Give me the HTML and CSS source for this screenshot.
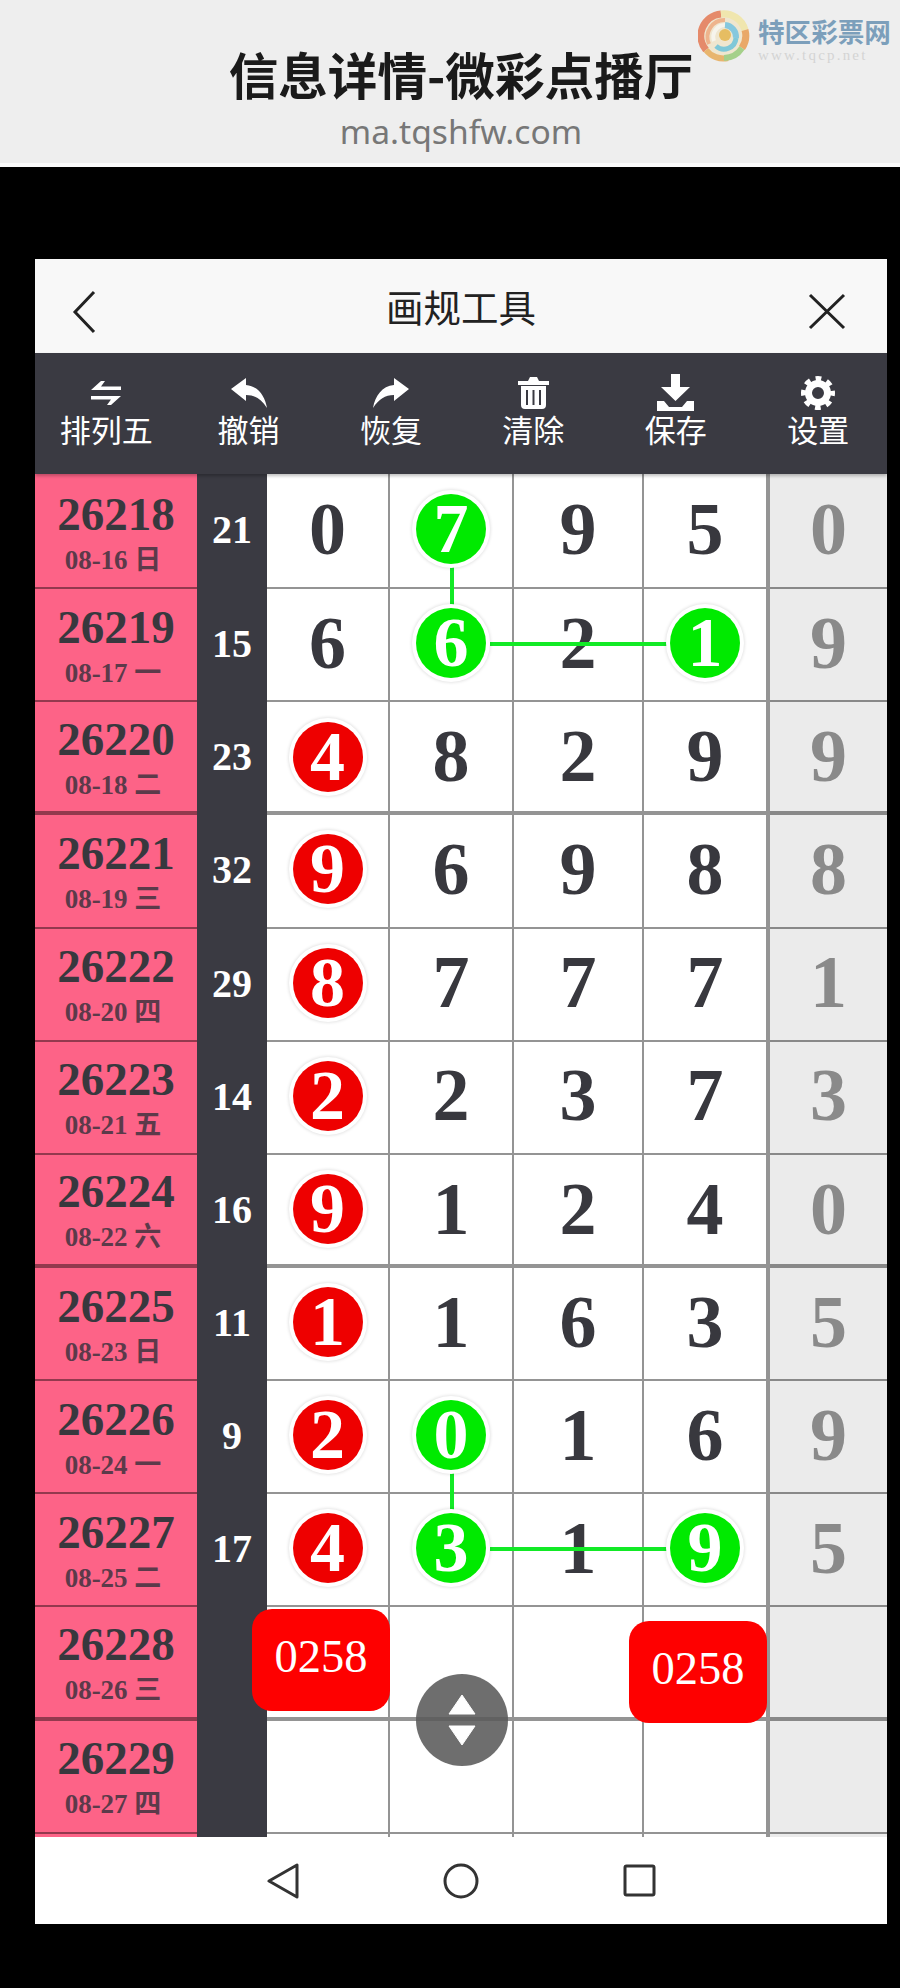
FILE: index.html
```html
<!DOCTYPE html>
<html lang="zh-CN">
<head>
  <meta charset="UTF-8">
  <meta name="viewport" content="width=device-width, initial-scale=1.0">
  <title>信息详情-微彩点播厅</title>
  <link rel="stylesheet" href="styles.css">
</head>
<body>
  <div class="topbar">
    <div class="top-title">信息详情-微彩点播厅</div>
    <div class="top-url">ma.tqshfw.com</div>
    <div class="logo">
      <svg class="logo-mark" viewBox="0 0 52 52" width="52" height="52" fill="none">
        <circle cx="26" cy="26" r="22" fill="#efe6cf"/>
        <path d="M23 4A22 22 0 0 0 8 40" stroke="#e58a6a" stroke-width="7"/>
        <path d="M27 10A17 17 0 0 0 11 34" stroke="#eeb48c" stroke-width="4"/>
        <path d="M8 40A22 22 0 0 0 30 48" stroke="#e8b56e" stroke-width="6"/>
        <path d="M23 4A22 22 0 0 1 47 20" stroke="#f0e6ae" stroke-width="7"/>
        <path d="M47 20A22 22 0 0 1 44 38" stroke="#e9a868" stroke-width="7"/>
        <path d="M44 38A22 22 0 0 1 26 48" stroke="#a5d08a" stroke-width="6"/>
        <path d="M16 31A12 12 0 0 1 27 15" stroke="#f6f4ec" stroke-width="4"/>
        <path d="M27 15A12 12 0 0 1 38 28" stroke="#86c8de" stroke-width="6"/>
        <path d="M38 28A12 12 0 0 1 18 36" stroke="#7fc8d8" stroke-width="5"/>
        <circle cx="27" cy="25" r="6" fill="#e6bd62"/>
      </svg>
      <div class="logo-text">
        <div class="logo-name">特区彩票网</div>
        <div class="logo-url">www.tqcp.net</div>
      </div>
    </div>
  </div>

  <div class="card">
    <div class="head">
      <svg class="head-icon" viewBox="0 0 24 44" width="24" height="44" fill="none">
        <path d="M22 2L3 22L22 42" stroke="#222" stroke-width="3"/>
      </svg>
      <div class="head-title">画规工具</div>
      <svg class="head-icon" viewBox="0 0 38 37" width="38" height="37" fill="none">
        <path d="M2 2L36 35M36 2L2 35" stroke="#222" stroke-width="3"/>
      </svg>
    </div>

    <div class="toolbar">
      <div class="tool">
        <div class="tool-icon">
          <svg viewBox="0 0 30 24" width="30" height="24" fill="#fff"><polygon points="0,9 10,0 14,0 10,5.5 30,5.5 30,9"/><polygon points="30,15 20,24 16,24 20,18.5 0,18.5 0,15"/></svg>
        </div>
        <div class="tool-label">排列五</div>
      </div>
      <div class="tool">
        <div class="tool-icon">
          <svg viewBox="0 0 36 30" width="36" height="30" fill="#fff"><path d="M0 11L15 0V7C27 8 34 18 36 30C30 21 24 17 15 17V23Z"/></svg>
        </div>
        <div class="tool-label">撤销</div>
      </div>
      <div class="tool">
        <div class="tool-icon">
          <svg viewBox="0 0 36 30" width="36" height="30" fill="#fff"><path d="M36 11L21 0V7C9 8 2 18 0 30C6 21 12 17 21 17V23Z"/></svg>
        </div>
        <div class="tool-label">恢复</div>
      </div>
      <div class="tool">
        <div class="tool-icon">
          <svg viewBox="0 0 31 32" width="31" height="32" fill="#fff"><path d="M10 4L12 0H19L21 4H31V8H0V4Z"/><path fill-rule="evenodd" d="M3 9H28V28A4 4 0 0 1 24 32H7A4 4 0 0 1 3 28ZM8 13V28H10V13ZM14.500 13V28H16.500V13ZM21 13V28H23V13Z"/></svg>
        </div>
        <div class="tool-label">清除</div>
      </div>
      <div class="tool">
        <div class="tool-icon">
          <svg viewBox="0 0 37 37" width="37" height="37" fill="#fff"><polygon points="14,0 23,0 23,13 33,13 18.500,27 4,13 14,13"/><polygon points="0,27 7,27 12,33 25,33 30,27 37,27 37,37 0,37"/></svg>
        </div>
        <div class="tool-label">保存</div>
      </div>
      <div class="tool">
        <div class="tool-icon">
          <svg viewBox="0 0 34 34" width="34" height="34" fill="none" stroke="#fff"><circle cx="17" cy="17" r="9.500" stroke-width="7"/><circle cx="17" cy="17" r="14.500" stroke-width="5" stroke-dasharray="5.700 5.690" stroke-dashoffset="2.850"/></svg>
        </div>
        <div class="tool-label">设置</div>
      </div>
    </div>

    <div class="board">
      <div class="row">
        <div class="cell issue"><div class="issue-no">26218</div><div class="issue-date">08-16 日</div></div>
        <div class="sum">21</div>
        <div class="cell">0</div>
        <div class="cell"><span class="ball green">7</span></div>
        <div class="cell">9</div>
        <div class="cell last">5</div>
        <div class="cell extra">0</div>
      </div>
      <div class="row">
        <div class="cell issue"><div class="issue-no">26219</div><div class="issue-date">08-17 一</div></div>
        <div class="sum">15</div>
        <div class="cell">6</div>
        <div class="cell"><span class="ball green">6</span></div>
        <div class="cell">2</div>
        <div class="cell last"><span class="ball green">1</span></div>
        <div class="cell extra">9</div>
      </div>
      <div class="row week-end">
        <div class="cell issue"><div class="issue-no">26220</div><div class="issue-date">08-18 二</div></div>
        <div class="sum">23</div>
        <div class="cell"><span class="ball red">4</span></div>
        <div class="cell">8</div>
        <div class="cell">2</div>
        <div class="cell last">9</div>
        <div class="cell extra">9</div>
      </div>
      <div class="row">
        <div class="cell issue"><div class="issue-no">26221</div><div class="issue-date">08-19 三</div></div>
        <div class="sum">32</div>
        <div class="cell"><span class="ball red">9</span></div>
        <div class="cell">6</div>
        <div class="cell">9</div>
        <div class="cell last">8</div>
        <div class="cell extra">8</div>
      </div>
      <div class="row">
        <div class="cell issue"><div class="issue-no">26222</div><div class="issue-date">08-20 四</div></div>
        <div class="sum">29</div>
        <div class="cell"><span class="ball red">8</span></div>
        <div class="cell">7</div>
        <div class="cell">7</div>
        <div class="cell last">7</div>
        <div class="cell extra">1</div>
      </div>
      <div class="row">
        <div class="cell issue"><div class="issue-no">26223</div><div class="issue-date">08-21 五</div></div>
        <div class="sum">14</div>
        <div class="cell"><span class="ball red">2</span></div>
        <div class="cell">2</div>
        <div class="cell">3</div>
        <div class="cell last">7</div>
        <div class="cell extra">3</div>
      </div>
      <div class="row week-end">
        <div class="cell issue"><div class="issue-no">26224</div><div class="issue-date">08-22 六</div></div>
        <div class="sum">16</div>
        <div class="cell"><span class="ball red">9</span></div>
        <div class="cell">1</div>
        <div class="cell">2</div>
        <div class="cell last">4</div>
        <div class="cell extra">0</div>
      </div>
      <div class="row">
        <div class="cell issue"><div class="issue-no">26225</div><div class="issue-date">08-23 日</div></div>
        <div class="sum">11</div>
        <div class="cell"><span class="ball red">1</span></div>
        <div class="cell">1</div>
        <div class="cell">6</div>
        <div class="cell last">3</div>
        <div class="cell extra">5</div>
      </div>
      <div class="row">
        <div class="cell issue"><div class="issue-no">26226</div><div class="issue-date">08-24 一</div></div>
        <div class="sum">9</div>
        <div class="cell"><span class="ball red">2</span></div>
        <div class="cell"><span class="ball green">0</span></div>
        <div class="cell">1</div>
        <div class="cell last">6</div>
        <div class="cell extra">9</div>
      </div>
      <div class="row">
        <div class="cell issue"><div class="issue-no">26227</div><div class="issue-date">08-25 二</div></div>
        <div class="sum">17</div>
        <div class="cell"><span class="ball red">4</span></div>
        <div class="cell"><span class="ball green">3</span></div>
        <div class="cell">1</div>
        <div class="cell last"><span class="ball green">9</span></div>
        <div class="cell extra">5</div>
      </div>
      <div class="row week-end">
        <div class="cell issue"><div class="issue-no">26228</div><div class="issue-date">08-26 三</div></div>
        <div class="sum"></div>
        <div class="cell"></div>
        <div class="cell"></div>
        <div class="cell"></div>
        <div class="cell last"></div>
        <div class="cell extra"></div>
      </div>
      <div class="row">
        <div class="cell issue"><div class="issue-no">26229</div><div class="issue-date">08-27 四</div></div>
        <div class="sum"></div>
        <div class="cell"></div>
        <div class="cell"></div>
        <div class="cell"></div>
        <div class="cell last"></div>
        <div class="cell extra"></div>
      </div>
      <div class="row">
        <div class="cell issue"></div>
        <div class="sum"></div>
        <div class="cell"></div>
        <div class="cell"></div>
        <div class="cell"></div>
        <div class="cell last"></div>
        <div class="cell extra"></div>
      </div>

      <!-- lines drawn on the chart, coordinates are the board's own -->
      <svg class="marks" viewBox="0 0 852 1363" width="852" height="1363" stroke="#12ea26" stroke-width="4">
        <line x1="417" y1="89" x2="417" y2="134"/>
        <line x1="455" y1="170" x2="632" y2="170"/>
        <line x1="417" y1="996" x2="417" y2="1042"/>
        <line x1="455" y1="1075" x2="632" y2="1075"/>
      </svg>

      <div class="pop pop-left">0258</div>
      <div class="pop pop-right">0258</div>
      <div class="drag">
        <svg viewBox="0 0 28 52" width="28" height="52" fill="#fff"><path d="M14 1L27 20H1Z" stroke="#fff" stroke-linejoin="round" stroke-width="1"/><path d="M1 32H27L14 51Z" stroke="#fff" stroke-linejoin="round" stroke-width="1"/></svg>
      </div>
    </div>

    <div class="sysnav">
      <svg viewBox="0 0 32 36" width="32" height="36" fill="none" stroke="#333" stroke-width="3" stroke-linejoin="round"><path d="M2 18L30 2V34Z"/></svg>
      <svg viewBox="0 0 36 36" width="36" height="36" fill="none" stroke="#333" stroke-width="3"><circle cx="18" cy="18" r="16"/></svg>
      <svg viewBox="0 0 33 33" width="33" height="33" fill="none" stroke="#333" stroke-width="3" stroke-linejoin="round"><rect x="2" y="2" width="29" height="29" rx="1.500"/></svg>
    </div>
  </div>
</body>
</html>
```

FILE: styles.css
```css
* {
  box-sizing: border-box;
}
body {
  margin: 0;
  width: 900px;
  height: 1988px;
  overflow: hidden;
  background-color: #000;
  font-family: "Noto Sans CJK SC", "Noto Sans", sans-serif;
}

/* page title strip */
.topbar {
  position: relative;
  height: 167px;
  background-color: #eeeeee;
  border-bottom: 4px solid #fbfbfb;
  display: flex;
  flex-direction: column;
  align-items: center;
  padding: 39px 0 0 22px;
}
.top-title {
  font-size: 49.6px;
  line-height: 69px;
  font-weight: 700;
  color: #1a1a1a;
}
.top-url {
  font-family: "Noto Sans", sans-serif;
  font-size: 33.6px;
  line-height: 46px;
  color: #777;
}
.logo {
  position: absolute;
  top: 10px;
  left: 698px;
  display: flex;
  gap: 8px;
}
.logo-mark {
  filter: blur(0.6px);
}
.logo-text {
  padding-top: 5px;
}
.logo-name {
  font-size: 26.600px;
  line-height: 32px;
  font-weight: 700;
  color: #7c9fbb;
}
.logo-url {
  font-family: "Liberation Serif", serif;
  font-size: 15px;
  line-height: 16px;
  letter-spacing: 2.2px;
  color: #d4d4d4;
}

/* phone card */
.card {
  width: 852px;
  height: 1665px;
  margin: 92px 0 0 35px;
  display: flex;
  flex-direction: column;
  background-color: #fff;
}
.head {
  height: 94px;
  flex-shrink: 0;
  background-color: #f8f8f8;
  display: flex;
  justify-content: space-between;
  align-items: center;
  padding: 0 41px 0 37px;
}
.head-icon {
  margin-top: 11px;
}
.head-title {
  font-size: 37.500px;
  line-height: 50px;
  margin: 0 0 0 18px;
  color: #222;
}
.toolbar {
  height: 121px;
  flex-shrink: 0;
  background-color: #3a3a42;
  display: grid;
  grid-template-columns: repeat(6, 142.4px);
  padding-top: 21px;
  box-shadow: 0 2px 3px rgba(0, 0, 0, 0.25);
  position: relative;
  z-index: 2;
}
.tool {
  display: flex;
  flex-direction: column;
  align-items: center;
  color: #fff;
}
.tool-icon {
  height: 37px;
  display: flex;
  align-items: center;
  justify-content: center;
}
.tool-label {
  font-size: 31px;
  line-height: 36px;
}

/* chart */
.board {
  position: relative;
  flex: 1;
  min-height: 0;
  overflow: hidden;
  font-family: "Liberation Serif", "Noto Sans CJK SC", serif;
  font-weight: 700;
  color: #38383e;
}
.row {
  display: grid;
  grid-template-columns: 162px 70px 123px 124px 130px 126px 117px;
  height: 113.15px;
}
.row:first-child {
  height: 115.15px;
}
.cell {
  display: flex;
  align-items: center;
  justify-content: center;
  font-size: 74px;
  padding-bottom: 3px;
  border-right: 2px solid rgba(0, 0, 0, 0.42);
  border-bottom: 2px solid rgba(0, 0, 0, 0.42);
}
.week-end .cell {
  border-bottom-width: 4px;
  padding-bottom: 0;
}
.issue {
  flex-direction: column;
  background-color: #fd6387;
  border-right: none;
  padding-bottom: 0;
  padding-top: 2px;
}
.row:first-child .issue {
  padding-top: 4px;
}
.issue-no {
  font-size: 47px;
  line-height: 52px;
}
.issue-date {
  font-size: 27px;
  line-height: 36px;
  color: #5c3a4a;
  margin: 2px 6px 0 0;
}
.sum {
  display: flex;
  align-items: center;
  justify-content: center;
  background-color: #3a3a42;
  color: #fff;
  font-size: 40px;
  padding-bottom: 4px;
}
.last {
  border-right-width: 4px;
}
.extra {
  background-color: #ebebeb;
  color: #8a8a8a;
  border-right: none;
}
.ball {
  width: 70px;
  height: 70px;
  border-radius: 50%;
  display: flex;
  align-items: center;
  justify-content: center;
  color: #fff;
  font-size: 70px;
  box-shadow: 0 0 0 4px #fff, 0 0 3px 5px rgba(0, 0, 0, 0.1);
  position: relative;
  z-index: 1;
}
.red {
  background-color: #ee0000;
}
.green {
  background-color: #00ea00;
}
.marks {
  position: absolute;
  top: 0;
  left: 0;
}
.pop {
  position: absolute;
  width: 138px;
  height: 102px;
  border-radius: 20px;
  background-color: #fe0000;
  color: #fff;
  font-size: 46.500px;
  font-weight: 400;
  display: flex;
  align-items: center;
  justify-content: center;
  padding-bottom: 8px;
  z-index: 2;
}
.pop-left {
  top: 1135px;
  left: 217px;
}
.pop-right {
  top: 1147px;
  left: 594px;
}
.drag {
  position: absolute;
  top: 1200px;
  left: 381px;
  width: 92px;
  height: 92px;
  border-radius: 50%;
  background-color: rgba(90, 90, 90, 0.88);
  display: flex;
  align-items: center;
  justify-content: center;
  z-index: 3;
}

/* android buttons */
.sysnav {
  height: 87px;
  flex-shrink: 0;
  background-color: #fff;
  display: flex;
  align-items: center;
  padding-left: 232px;
  gap: 144px;
}
```
